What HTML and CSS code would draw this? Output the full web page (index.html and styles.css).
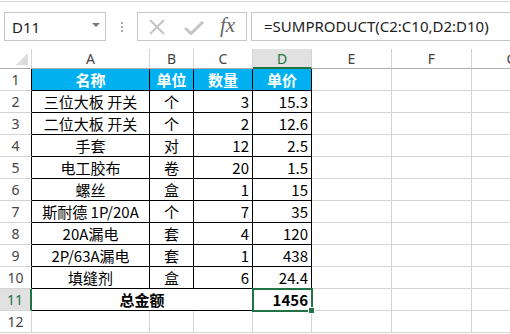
FILE: index.html
```html
<!DOCTYPE html>
<html>
<head>
<meta charset="utf-8">
<link rel="stylesheet" href="styles.css">
</head>
<body>
<div class="app">
  <div class="fbar">
    <div class="namebox"><span class="nb-text">D11</span><span class="nb-arrow"></span></div>
    <div class="dots"><i></i><i></i><i></i></div>
    <div class="fxbox">
      <svg class="ico-x" width="18" height="16" viewBox="0 0 18 16"><path d="M2 1 L16 15 M16 1 L2 15" stroke="#c4c4c4" stroke-width="2" fill="none"/></svg>
      <svg class="ico-ok" width="20" height="14" viewBox="0 0 20 14"><path d="M1 7 L7 12.5 L19 1" stroke="#c4c4c4" stroke-width="3" fill="none"/></svg>
      <span class="fx">fx</span>
    </div>
    <div class="formula">=SUMPRODUCT(C2:C10,D2:D10)</div>
  </div>
  <div class="sheet">
    <div class="corner"><span class="tri"></span></div>
    <div class="ch">A</div><div class="ch">B</div><div class="ch">C</div><div class="ch sel">D</div><div class="ch">E</div><div class="ch">F</div><div class="ch">G</div>

    <div class="rh tb">1</div>
    <div class="c t hd ctr">名称</div><div class="c t hd ctr">单位</div><div class="c t hd ctr">数量</div><div class="c t hd ctr">单价</div><div class="c"></div><div class="c"></div><div class="c"></div>

    <div class="rh tb">2</div>
    <div class="c t ctr">三位大板 开关</div><div class="c t ctr">个</div><div class="c t num">3</div><div class="c t num">15.3</div><div class="c"></div><div class="c"></div><div class="c"></div>

    <div class="rh tb">3</div>
    <div class="c t ctr">二位大板 开关</div><div class="c t ctr">个</div><div class="c t num">2</div><div class="c t num">12.6</div><div class="c"></div><div class="c"></div><div class="c"></div>

    <div class="rh tb">4</div>
    <div class="c t ctr">手套</div><div class="c t ctr">对</div><div class="c t num">12</div><div class="c t num">2.5</div><div class="c"></div><div class="c"></div><div class="c"></div>

    <div class="rh tb">5</div>
    <div class="c t ctr">电工胶布</div><div class="c t ctr">卷</div><div class="c t num">20</div><div class="c t num">1.5</div><div class="c"></div><div class="c"></div><div class="c"></div>

    <div class="rh tb">6</div>
    <div class="c t ctr">螺丝</div><div class="c t ctr">盒</div><div class="c t num">1</div><div class="c t num">15</div><div class="c"></div><div class="c"></div><div class="c"></div>

    <div class="rh tb">7</div>
    <div class="c t ctr">斯耐德 1P/20A</div><div class="c t ctr">个</div><div class="c t num">7</div><div class="c t num">35</div><div class="c"></div><div class="c"></div><div class="c"></div>

    <div class="rh tb">8</div>
    <div class="c t ctr">20A漏电</div><div class="c t ctr">套</div><div class="c t num">4</div><div class="c t num">120</div><div class="c"></div><div class="c"></div><div class="c"></div>

    <div class="rh tb">9</div>
    <div class="c t ctr">2P/63A漏电</div><div class="c t ctr">套</div><div class="c t num">1</div><div class="c t num">438</div><div class="c"></div><div class="c"></div><div class="c"></div>

    <div class="rh tb">10</div>
    <div class="c t ctr">填缝剂</div><div class="c t ctr">盒</div><div class="c t num">6</div><div class="c t num">24.4</div><div class="c"></div><div class="c"></div><div class="c"></div>

    <div class="rh selrow">11</div>
    <div class="c t ctr bold span3">总金额</div><div class="c t num bold active">1456</div><div class="c"></div><div class="c"></div><div class="c"></div>

    <div class="rh">12</div>
    <div class="c"></div><div class="c"></div><div class="c"></div><div class="c"></div><div class="c"></div><div class="c"></div><div class="c"></div>
  </div>
</div>
</body>
</html>
```
FILE: styles.css
```css
html, body {
  margin: 0;
  padding: 0;
  background: #fff;
  overflow: hidden;
}
.app {
  width: 510px;
  height: 334px;
  overflow: hidden;
}
.fbar {
  height: 48px;
  border-top: 1px solid #d4d4d4;
  margin-top: 1px;
  box-sizing: border-box;
  display: flex;
  align-items: flex-start;
  padding: 10px 0 0 4px;
}
.namebox {
  width: 102px;
  height: 29px;
  box-sizing: border-box;
  border: 1px solid #c6c6c6;
  display: flex;
  align-items: center;
  justify-content: space-between;
  padding: 0 4px 0 7px;
  font-family: "Noto Sans", sans-serif;
  font-size: 15px;
  color: #222;
}
.nb-arrow {
  width: 0;
  height: 0;
  border-left: 4px solid transparent;
  border-right: 4px solid transparent;
  border-top: 4px solid #777;
  margin-right: 1px;
  margin-bottom: 3px;
}
.dots {
  width: 31px;
  height: 29px;
  display: flex;
  flex-direction: column;
  align-items: center;
  justify-content: center;
  gap: 2px;
}
.dots i {
  display: block;
  width: 2px;
  height: 2px;
  background: #aaa;
}
.fxbox {
  width: 110px;
  height: 29px;
  box-sizing: border-box;
  border: 1px solid #c6c6c6;
  display: flex;
  align-items: center;
  padding-left: 10px;
}
.ico-x { margin-right: 18px; }
.ico-ok { margin-right: 16px; margin-top: 2px; }
.fx {
  font-family: "Liberation Serif", serif;
  font-style: italic;
  font-size: 21px;
  color: #666;
  margin-top: -2px;
}
.formula {
  margin-left: 4px;
  flex: 1;
  height: 29px;
  box-sizing: border-box;
  border: 1px solid #c6c6c6;
  border-right: none;
  padding-left: 12px;
  font-family: "Noto Sans", sans-serif;
  font-size: 15px;
  line-height: 26px;
  color: #222;
  white-space: nowrap;
}
.sheet {
  display: grid;
  grid-template-columns: 32px 118px 44px 59px 59px 80px 80px 80px;
  grid-template-rows: 20px;
  grid-auto-rows: 22px;
  width: 552px;
  font-family: "Noto Sans CJK SC", sans-serif;
  font-size: 15px;
  color: #000;
}
.sheet > div {
  box-sizing: border-box;
  display: flex;
  align-items: center;
  white-space: nowrap;
  overflow: visible;
}
.corner {
  border-right: 1px solid #d4d4d4;
  border-bottom: 1px solid #ababab;
  position: relative;
}
.tri {
  position: absolute;
  right: 3px;
  bottom: 3px;
  width: 0;
  height: 0;
  border-left: 12px solid transparent;
  border-bottom: 12px solid #dcdcdc;
}
.ch {
  justify-content: center;
  border-right: 1px solid #d4d4d4;
  border-bottom: 1px solid #ababab;
  font-family: "Noto Sans", sans-serif;
  font-size: 14px;
  color: #444;
}
.ch.sel {
  background: #e1e1e1;
  color: #217346;
  border-bottom: 2px solid #217346;
}
.rh {
  justify-content: center;
  border-right: 1px solid #d4d4d4;
  border-bottom: 1px solid #d4d4d4;
  font-family: "Noto Sans", sans-serif;
  font-size: 14px;
  color: #444;
}
.rh.tb { border-right-color: #000; }
.rh.selrow {
  background: #e1e1e1;
  color: #217346;
  border-right: 2px solid #217346;
}
.c {
  border-right: 1px solid #d4d4d4;
  border-bottom: 1px solid #d4d4d4;
}
.c.t {
  border-right-color: #000;
  border-bottom-color: #000;
}
.hd {
  background: #00b0f0;
  color: #fff;
  font-weight: bold;
}
.ctr { justify-content: center; }
.num { justify-content: flex-end; padding-right: 3px; }
.bold { font-weight: bold; }
.span3 { grid-column: span 3; }
.active {
  position: relative;
  outline: 2px solid #217346;
  outline-offset: -1px;
}
.active::after {
  content: "";
  position: absolute;
  right: -4px;
  bottom: -4px;
  width: 5px;
  height: 5px;
  background: #217346;
  border: 1px solid #fff;
}
```
